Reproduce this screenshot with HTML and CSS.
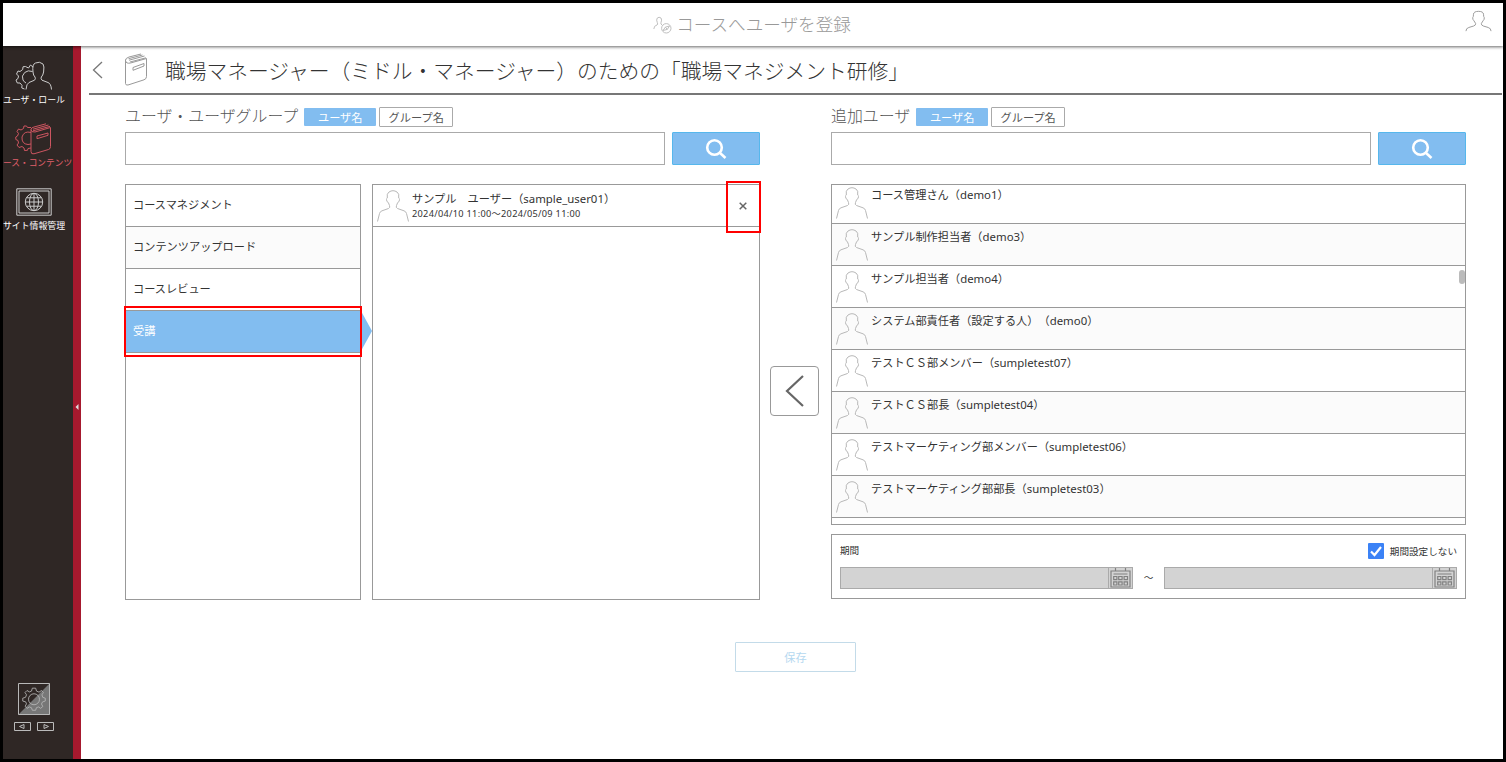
FILE: index.html
```html
<!DOCTYPE html>
<html lang="ja">
<head>
    <meta charset="UTF-8">
    <meta name="viewport" content="width=device-width, initial-scale=1.0">
    <title>コースへユーザを登録</title>
    <link rel="stylesheet" href="styles.css">
</head>
<body>
    <svg class="defs" width="0" height="0">
        <symbol id="person" viewBox="0 0 32 32">
            <path d="M0.5 31.5 L2.5 23.5 Q3 21.5 5 20.8 L11.5 18.5 Q13.5 17.5 12.5 15.5 L11.3 12.5 Q9.5 12 9.5 9.5 Q9.5 8.3 10.3 8 Q9.5 3.5 12 2 Q14 0.7 16 0.7 Q18 0.7 20 2 Q22.5 3.5 21.7 8 Q22.5 8.3 22.5 9.5 Q22.5 12 20.7 12.5 L19.5 15.5 Q18.5 17.5 20.5 18.5 L27 20.8 Q29 21.5 29.5 23.5 L31.5 31.5"/>
        </symbol>
        <symbol id="search" viewBox="0 0 22 22">
            <circle cx="9.5" cy="9.5" r="7.3"/>
            <path d="M14.8 14.8 L20.5 20"/>
        </symbol>
        <symbol id="book" viewBox="0 0 24 34">
            <path d="M1.5 6.5 V30.5 Q1.7 32.5 4 32 L20 26.8 Q22.5 26 22.5 23.5 V5.5 L6.5 10 Q2 11 1.5 7.5 Q1.5 5 5 4 L17 1 M5 7.2 L20.5 3 M4.5 5.7 L18.5 2 M6 9 L22 4.8 M9 14.5 L20 10.5 V13 L9 17.3 Z"/>
        </symbol>
        <symbol id="gear" viewBox="0 0 30 30">
            <path d="M13 2 H17 L18 5.5 L21 6.8 L24 4.8 L26.3 7.2 L24.5 10 L25.5 13 L28.5 14 V17.5 L25.2 18.5 L24 21 L25.6 24 L23 26.2 L20.3 24.5 L17.8 25.5 L17 28.5 H13 L12 25.5 L9.5 24.5 L6.8 26.2 L4.3 23.8 L6 20.8 L5 18.4 L1.5 17.5 V14 L4.8 13 L6 10 L4.2 7.2 L6.6 4.8 L9.5 6.5 L12 5.5 Z"/>
            <circle cx="15" cy="15.3" r="6.6"/>
        </symbol>
        <symbol id="calendar" viewBox="0 0 22 20">
            <path d="M1.5 3 H20.5 V19 H1.5 Z M6 0 V3 M16 0 V3 M4 6 H18 M4.2 8.5 H7.4 V11.7 H4.2 Z M9.2 8.5 H12.6 V11.7 H9.2 Z M14.6 8.5 H18 V11.7 H14.6 Z M4.2 13.8 H7.4 V17 H4.2 Z M9.2 13.8 H12.6 V17 H9.2 Z M14.6 13.8 H18 V17 H14.6 Z"/>
        </symbol>
    </svg>

    <div class="app">
        <header class="header">
            <svg class="header-icon" viewBox="0 0 19 18">
                <path d="M0.8 13 Q1 9.5 4 9 Q5.2 8.3 4.3 6.5 Q3 4 4.3 2 Q6 0.5 8 2 Q9.2 4 8 6.5 Q7.4 8.2 9 9"/>
                <circle cx="13.3" cy="12.3" r="4.7"/>
                <path d="M10 14.5 L12.3 11.2 L16.5 10 L14.3 13.4 Z M12.3 11.2 L14.3 13.4"/>
            </svg>
            <h1 class="header-title">コースへユーザを登録</h1>
            <svg class="header-user" viewBox="0 0 28 22">
                <path d="M1 21.5 Q1 18.5 4 17.7 L9 16.2 Q11.5 15.3 11 13.5 L9.3 10.8 Q7.8 9.5 8 7.5 Q8.8 7 8.8 4 Q9 1 14 1 Q19 1 19.2 4 Q19.2 7 20 7.5 Q20.2 9.5 18.7 10.8 L17 13.5 Q16.5 15.3 19 16.2 L24 17.7 Q27 18.5 27 21.5"/>
            </svg>
        </header>

        <div class="body">
            <nav class="sidebar">
                <div class="nav-item">
                    <svg class="nav-icon" viewBox="0 0 38 30">
                        <path d="M18 6 L15.5 4 L13.5 7 L10.5 5.5 L8 5.8 L7.7 8.5 L5 10.5 L3 10 L1.5 13 L3.5 15 L3 17.5 L1 19 L2.3 22 L5 22 L7 24.3 L6.8 27 L9.5 28"/>
                        <path d="M17.5 10.5 Q13 8.7 9.7 11.5 Q6 15 8 19 Q9 21 11 22"/>
                        <path d="M11 28.5 Q11.5 22.5 14 21.5 L19.5 19.2 Q21 18 20 16 Q18.2 14.5 18 11 Q17 3 20.5 2 Q24.5 0 28 3 Q29.5 5 28.6 11 Q28 14.5 26.3 16 Q25.5 18 27 19.2 L33 21.5 Q36 22.5 36.5 28.5"/>
                    </svg>
                    <span class="nav-label">ユーザ・ロール</span>
                </div>
                <div class="nav-item active">
                    <svg class="nav-icon" viewBox="0 0 38 32">
                        <path d="M16 4.5 H12.5 L11.5 3 H9 L8.5 5.5 L6 7 L3.5 6 L2 8.5 L3.5 10.5 L2.5 13 L0.8 14 V16.5 L3 17.5 L3.5 20 L2 22 L4 24.5 L7 23.5 L9 25 L9.5 27.5 L12.5 27.3 L13 25.5 L16 25"/>
                        <path d="M16 9.5 Q9 7.5 7 14 Q6.5 21 13 21.5 L16 21"/>
                        <path d="M16 6.5 V28.5 Q16 31.5 19 30.8 L33.5 26.5 Q35.5 26 35.5 23.5 V4.5 L20 9 Q16 9.5 16 6.5 Q16 4.7 19 4 L31 0.8 M18 6.2 L33.5 2 M18 7.8 L35 3.4 M22 13 L33 10 V12.3 L22 15.7 Z"/>
                    </svg>
                    <span class="nav-label">ース・コンテンツ</span>
                </div>
                <div class="nav-item site">
                    <svg class="nav-icon" viewBox="0 0 36 28">
                        <path d="M0.8 0.8 H35.2 V27.2 H0.8 Z M3 3 H33 V25 H3 Z"/>
                        <circle cx="18" cy="14" r="8.7"/>
                        <ellipse cx="18" cy="14" rx="4.5" ry="8.7"/>
                        <path d="M18 5.3 V22.7 M9.3 14 H26.7 M10.5 9.8 H25.5 M10.5 18.2 H25.5"/>
                    </svg>
                    <span class="nav-label">サイト情報管理</span>
                </div>
                <div class="settings">
                    <svg class="settings-icon" viewBox="0 0 32 32">
                        <path class="half" d="M32 0 V32 H0 Z"/>
                        <path d="M0.5 0.5 H31.5 V31.5 H0.5 Z"/>
                        <use href="#gear" x="3.5" y="3.5" width="25" height="25"/>
                    </svg>
                    <div class="pager">
                        <svg viewBox="0 0 17 9"><path d="M0.5 0.5 H16.5 V8.5 H0.5 Z M10 2.5 V6.5 L5.5 4.5 Z"/></svg>
                        <svg viewBox="0 0 17 9"><path d="M0.5 0.5 H16.5 V8.5 H0.5 Z M7 2.5 V6.5 L11.5 4.5 Z"/></svg>
                    </div>
                </div>
            </nav>
            <div class="sidebar-handle">
                <svg viewBox="0 0 4 8"><path d="M3.5 1 V7 L0.5 4 Z"/></svg>
            </div>

            <main class="main">
                <div class="title-bar">
                    <svg class="back" viewBox="0 0 11 18"><path d="M10 1 L1.5 9 L10 17"/></svg>
                    <svg class="book"><use href="#book"/></svg>
                    <h2 class="title">職場マネージャー（ミドル・マネージャー）のための「職場マネジメント研修」</h2>
                </div>

                <div class="columns">
                    <section class="column">
                        <div class="column-head">
                            <span class="column-title">ユーザ・ユーザグループ</span>
                            <button class="tab selected">ユーザ名</button>
                            <button class="tab">グループ名</button>
                        </div>
                        <div class="search-row">
                            <input class="search-input" type="text">
                            <button class="search-button"><svg><use href="#search"/></svg></button>
                        </div>
                        <div class="panels">
                            <ul class="roles">
                                <li class="role">コースマネジメント</li>
                                <li class="role">コンテンツアップロード</li>
                                <li class="role">コースレビュー</li>
                                <li class="role current">受講<span class="mark mark-role"></span></li>
                            </ul>
                            <div class="members">
                                <div class="member">
                                    <svg class="avatar"><use href="#person"/></svg>
                                    <div class="member-text">
                                        <div class="user-name">サンプル　ユーザー（<span class="latin">sample_user01</span>）</div>
                                        <div class="term">2024/04/10 11:00～2024/05/09 11:00</div>
                                    </div>
                                    <div class="remove">
                                        <svg viewBox="0 0 8 8"><path d="M0.7 0.7 L7.3 7.3 M7.3 0.7 L0.7 7.3"/></svg>
                                        <span class="mark mark-remove"></span>
                                    </div>
                                </div>
                            </div>
                        </div>
                    </section>

                    <div class="move">
                        <button class="move-button"><svg viewBox="0 0 20 32"><path d="M18 1 L2 16 L18 31"/></svg></button>
                    </div>

                    <section class="column">
                        <div class="column-head">
                            <span class="column-title">追加ユーザ</span>
                            <button class="tab selected">ユーザ名</button>
                            <button class="tab">グループ名</button>
                        </div>
                        <div class="search-row">
                            <input class="search-input" type="text">
                            <button class="search-button"><svg><use href="#search"/></svg></button>
                        </div>
                        <div class="candidates">
                            <ul class="candidate-list">
                                <li class="candidate"><svg class="avatar"><use href="#person"/></svg><span class="user-name">コース管理さん（<span class="latin">demo1</span>）</span></li>
                                <li class="candidate"><svg class="avatar"><use href="#person"/></svg><span class="user-name">サンプル制作担当者（<span class="latin">demo3</span>）</span></li>
                                <li class="candidate"><svg class="avatar"><use href="#person"/></svg><span class="user-name">サンプル担当者（<span class="latin">demo4</span>）</span></li>
                                <li class="candidate"><svg class="avatar"><use href="#person"/></svg><span class="user-name">システム部責任者（設定する人）（<span class="latin">demo0</span>）</span></li>
                                <li class="candidate"><svg class="avatar"><use href="#person"/></svg><span class="user-name">テストＣＳ部メンバー（<span class="latin">sumpletest07</span>）</span></li>
                                <li class="candidate"><svg class="avatar"><use href="#person"/></svg><span class="user-name">テストＣＳ部長（<span class="latin">sumpletest04</span>）</span></li>
                                <li class="candidate"><svg class="avatar"><use href="#person"/></svg><span class="user-name">テストマーケティング部メンバー（<span class="latin">sumpletest06</span>）</span></li>
                                <li class="candidate"><svg class="avatar"><use href="#person"/></svg><span class="user-name">テストマーケティング部部長（<span class="latin">sumpletest03</span>）</span></li>
                            </ul>
                            <span class="scroll-thumb"></span>
                        </div>
                        <div class="period">
                            <div class="period-head">
                                <span>期間</span>
                                <label class="no-period">
                                    <svg class="check" viewBox="0 0 16 16"><path d="M3 8.5 L6.5 12 L13 4"/></svg>
                                    期間設定しない
                                </label>
                            </div>
                            <div class="period-row">
                                <div class="date"><svg><use href="#calendar"/></svg></div>
                                <span class="tilde">～</span>
                                <div class="date"><svg><use href="#calendar"/></svg></div>
                            </div>
                        </div>
                    </section>
                </div>

                <button class="save">保存</button>
            </main>
        </div>
    </div>
</body>
</html>
```
FILE: styles.css
```css
* {
    box-sizing: border-box;
}

body {
    margin: 0;
    font-family: "Noto Sans CJK JP", sans-serif;
    font-size: 11.2px;
    color: #333;
    text-spacing-trim: space-all;
}

button {
    font-family: inherit;
    padding: 0;
}

ul {
    list-style: none;
    margin: 0;
    padding: 0;
}

svg {
    display: block;
    fill: none;
    stroke: #999;
    stroke-width: 1;
    flex: none;
}

.defs {
    position: absolute;
}

.latin {
    font-family: "Noto Sans", sans-serif;
    font-size: 11.4px;
}

.app {
    display: flex;
    flex-direction: column;
    width: 1506px;
    height: 762px;
    border: 3px solid #000;
    background: #fff;
    overflow: hidden;
}

/* header */
.header {
    position: relative;
    z-index: 1;
    display: flex;
    align-items: center;
    justify-content: center;
    gap: 4px;
    height: 43px;
    padding-right: 2px;
    padding-bottom: 2px;
    flex: none;
    background: #fff;
    box-shadow: 0 1px 3px rgba(0, 0, 0, 0.6);
}

.header-icon {
    width: 19px;
    height: 18px;
    margin-top: 2px;
    stroke: #c0c0c0;
}

.header-title {
    margin: 0;
    font-size: 17.6px;
    font-weight: 300;
    color: #999;
}

.header-user {
    position: absolute;
    right: 11px;
    top: 7px;
    width: 27px;
    height: 22px;
}

.body {
    display: flex;
    flex: 1;
}

/* sidebar */
.sidebar {
    display: flex;
    flex-direction: column;
    width: 70px;
    padding-top: 14px;
    background: #2f2725;
    overflow: hidden;
}

.nav-item {
    display: flex;
    flex-direction: column;
    align-items: center;
    width: 62px;
    height: 63px;
    color: #fff;
}

.nav-icon {
    width: 38px;
    height: 32px;
    stroke: #ccc;
}

.nav-label {
    margin-top: 2px;
    font-size: 8.9px;
    line-height: 12px;
    white-space: nowrap;
}

.nav-item.active {
    color: #e0606c;
}

.nav-item.active .nav-icon {
    stroke: #cc5560;
}

.nav-item.active .nav-label {
    align-self: flex-start;
    font-size: 8.7px;
}

.nav-item.site .nav-icon {
    width: 36px;
    height: 28px;
    margin: 2px 0;
}

.settings {
    display: flex;
    flex-direction: column;
    align-items: center;
    gap: 7px;
    width: 62px;
    margin-top: auto;
    margin-bottom: 28px;
}

.settings-icon {
    width: 32px;
    height: 32px;
    stroke: #b8b8b8;
}

.settings-icon .half {
    fill: #777;
    stroke: none;
}

.pager {
    display: flex;
    gap: 6px;
}

.pager svg {
    width: 17px;
    height: 9px;
    stroke: #bbb;
}

.sidebar-handle {
    display: flex;
    align-items: center;
    justify-content: center;
    width: 8px;
    padding-top: 8px;
    background: #a6192e;
}

.sidebar-handle svg {
    width: 4px;
    height: 8px;
    fill: #ddd;
    stroke: none;
}

/* main */
.main {
    display: flex;
    flex-direction: column;
    flex: 1;
    padding-left: 8px;
    padding-right: 1px;
}

.title-bar {
    display: flex;
    align-items: center;
    height: 49px;
    padding-left: 3px;
    border-bottom: 2px solid #777;
}

.back {
    width: 11px;
    height: 18px;
    stroke: #777;
    stroke-width: 1.3;
}

.book {
    width: 24px;
    height: 34px;
    margin-left: 21px;
    margin-right: 17px;
}

.title {
    margin: 0;
    font-size: 20.76px;
    font-weight: 300;
    color: #333;
    white-space: nowrap;
}

.columns {
    display: flex;
    padding: 12px 0 0 36px;
}

.column {
    width: 635px;
}

.column-head {
    display: flex;
    align-items: center;
    height: 20px;
}

.column-title {
    margin-right: 6px;
    padding-bottom: 3px;
    font-size: 15.9px;
    font-weight: 300;
    line-height: 18px;
    color: #555;
}

.tab {
    width: 74px;
    height: 20px;
    border: 1px solid #aaa;
    border-radius: 1px;
    background: #fff;
    color: #555;
    font-size: 11.2px;
    line-height: 16px;
}

.tab.selected {
    width: 72px;
    height: 18px;
    margin-right: 3px;
    border: none;
    background: #82bdf0;
    color: #fff;
}

.search-row {
    display: flex;
    gap: 7px;
    margin-top: 5px;
}

.search-input {
    width: 540px;
    height: 33px;
    border: 1px solid #aaa;
}

.search-button {
    display: flex;
    align-items: center;
    justify-content: center;
    width: 88px;
    height: 33px;
    border: 1px solid #56b7ec;
    border-radius: 1px;
    background: #82bdf0;
}

.search-button svg {
    width: 22px;
    height: 22px;
    stroke: #fff;
    stroke-width: 2.6;
}

.panels {
    display: flex;
    gap: 11px;
    margin-top: 19px;
}

.roles {
    width: 236px;
    height: 416px;
    border: 1px solid #999;
}

.role {
    height: 42px;
    padding-left: 7px;
    border-bottom: 1px solid #999;
    line-height: 38px;
}

.role:nth-child(even) {
    background: #fbfbfb;
}

.role.current {
    position: relative;
    background: #82bdf0;
    color: #fff;
}

.role.current::after {
    content: "";
    position: absolute;
    left: 235px;
    top: 0;
    border: solid transparent;
    border-width: 20px 0 20px 11px;
    border-left-color: #82bdf0;
}

/* red frames */
.mark {
    position: absolute;
    z-index: 2;
    border: 2px solid #f00;
}

.mark-role {
    left: -2px;
    top: -5px;
    width: 238px;
    height: 51px;
    box-shadow: inset 0 2px #fff, inset 0 -2px #fff;
}

.mark-remove {
    left: -1px;
    top: -4px;
    width: 35px;
    height: 52px;
}

.members {
    width: 388px;
    border: 1px solid #999;
}

.member {
    display: flex;
    height: 42px;
    padding-left: 4px;
    border-bottom: 1px solid #999;
}

.avatar {
    width: 32px;
    height: 32px;
    margin-top: 5px;
    margin-right: 3px;
    stroke: #b8b8b8;
}

.member-text {
    flex: 1;
    padding-top: 5px;
}

.user-name {
    line-height: 16px;
    white-space: nowrap;
}

.term {
    font-family: "Noto Sans", "Noto Sans CJK JP", sans-serif;
    font-size: 9.2px;
    line-height: 14px;
    letter-spacing: 0.3px;
}

.remove {
    position: relative;
    display: flex;
    align-items: center;
    justify-content: center;
    width: 32px;
}

.remove svg {
    width: 8px;
    height: 8px;
    stroke: #666;
    stroke-width: 1.5;
}

.move {
    width: 71px;
    padding: 259px 0 0 10px;
}

.move-button {
    display: flex;
    align-items: center;
    justify-content: center;
    width: 49px;
    height: 50px;
    border: 1px solid #999;
    border-radius: 4px;
    background: #fff;
}

.move-button svg {
    width: 20px;
    height: 32px;
    stroke: #666;
    stroke-width: 2.2;
}

.candidates {
    position: relative;
    height: 341px;
    margin-top: 19px;
    border: 1px solid #999;
    overflow: hidden;
}

.candidate-list {
    margin-top: -3px;
}

.candidate {
    display: flex;
    height: 42px;
    padding-left: 4px;
    border-bottom: 1px solid #999;
}

.candidate:nth-child(even) {
    background: #fbfbfb;
}

.candidate .user-name {
    padding-top: 4px;
}

.scroll-thumb {
    position: absolute;
    right: 0;
    top: 85px;
    width: 6px;
    height: 14px;
    border-radius: 3px;
    background: #bbb;
}

.period {
    height: 65px;
    margin-top: 9px;
    padding: 8px;
    border: 1px solid #999;
    font-size: 9.6px;
}

.period-head {
    display: flex;
    justify-content: space-between;
    height: 16px;
    line-height: 15px;
}

.no-period {
    display: flex;
    gap: 6px;
    line-height: 17px;
}

.check {
    width: 16px;
    height: 16px;
    border-radius: 1px;
    background: #3b82f6;
    stroke: #fff;
    stroke-width: 2.2;
}

.period-row {
    display: flex;
    align-items: center;
    justify-content: space-between;
    margin-top: 8px;
}

.date {
    display: flex;
    justify-content: flex-end;
    width: 293px;
    height: 22px;
    border: 1px solid #aaa;
    background: #d3d3d3;
}

.date svg {
    width: 24px;
    height: 20px;
    border-left: 1px solid #aaa;
    stroke: #808080;
    stroke-width: 1.2;
}

.tilde {
    padding-bottom: 3px;
    line-height: 16px;
}

.save {
    width: 121px;
    height: 30px;
    margin: 42px 0 0 646px;
    border: 1px solid #c3dbe9;
    border-radius: 1px;
    background: #fff;
    color: #b5d8f0;
    font-size: 11.2px;
    line-height: 26px;
}
```
